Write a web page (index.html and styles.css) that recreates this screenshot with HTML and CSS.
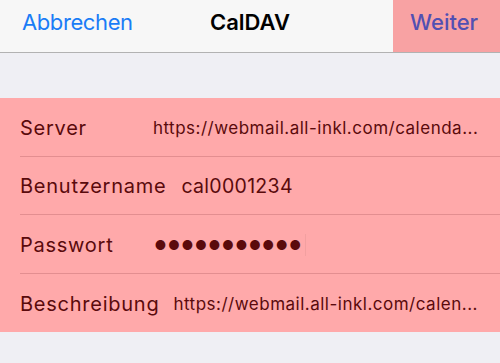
FILE: index.html
```html
<!DOCTYPE html>
<html lang="de">
<head>
<meta charset="utf-8">
<link rel="stylesheet" href="styles.css">
</head>
<body>
<div class="screen">
  <header class="nav">
    <span class="nav-cancel">Abbrechen</span>
    <span class="nav-title">CalDAV</span>
    <span class="nav-next">Weiter</span>
  </header>
  <div class="spacer"></div>
  <section class="form">
    <div class="row">
      <span class="label">Server</span>
      <span class="value small server">https://webmail.all-inkl.com/calenda...</span>
    </div>
    <div class="row">
      <span class="label">Benutzername</span>
      <span class="value user">cal0001234</span>
    </div>
    <div class="row">
      <span class="label">Passwort</span>
      <span class="value dots">●●●●●●●●●●●</span><span class="caret"></span>
    </div>
    <div class="row last">
      <span class="label">Beschreibung</span>
      <span class="value small desc">https://webmail.all-inkl.com/calen...</span>
    </div>
  </section>
</div>
</body>
</html>
```

FILE: styles.css
```css
* { box-sizing: border-box; margin: 0; padding: 0; }
html, body { width: 500px; height: 363px; overflow: hidden; }
body {
  background: #efeff4;
  font-family: Inter, "Liberation Sans", Arial, sans-serif;
}
.screen { width: 500px; height: 363px; display: flex; flex-direction: column; }
.nav {
  height: 53px;
  background: #f7f7f7;
  border-bottom: 1px solid #b2b2b2;
  display: flex;
  align-items: stretch;
  position: relative;
}
.nav-cancel {
  color: #1a7cf6;
  font-size: 22px;
  letter-spacing: -0.4px;
  padding-left: 22px;
  line-height: 45px;
}
.nav-title {
  position: absolute;
  left: 0; right: 0;
  text-align: center;
  font-weight: 600;
  font-size: 22px;
  line-height: 45px;
  color: #000;
  pointer-events: none;
}
.nav-next {
  margin-left: auto;
  width: 107px;
  background: #f8a2a3;
  color: #5250b2;
  font-size: 22px;
  font-weight: 500;
  padding-left: 17px;
  line-height: 45px;
}
.spacer { height: 45px; }
.form {
  background: #ffa9aa;
  padding-left: 20px;
}
.row {
  height: 58.5px;
  display: flex;
  align-items: center;
  border-bottom: 1px solid #e38e90;
  color: #5a0a0c;
  padding-top: 2px;
}
.row.last { border-bottom: none; }
.label { font-size: 20px; letter-spacing: 0.75px; white-space: nowrap; }
.value { white-space: nowrap; }
.value.small { font-size: 17px; letter-spacing: 0.5px; }
.server { margin-left: 66px; }
.user { font-size: 19.5px; letter-spacing: 0.3px; margin-left: 15px; }
.dots { font-size: 13px; letter-spacing: 1.6px; margin-left: 41px; }
.desc { margin-left: 14px; }
.caret { width: 1px; height: 22px; background: #f2a0a0; margin-left: 2px; }
```
